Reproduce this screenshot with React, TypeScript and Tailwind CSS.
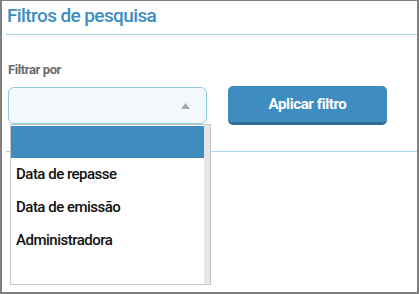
import { useState } from "react";

const options = ["", "Data de repasse", "Data de emissão", "Administradora"];

const App = () => {
  const [selected] = useState(0);

  return (
    <div className="relative w-[419px] h-[294px] bg-white border-2 border-t border-[#808080] font-['Roboto',sans-serif] overflow-hidden">
      {/* Header */}
      <div className="ml-[4px] h-[34px] border-b border-[#a6d8ec] pl-[1px] pt-[4px]">
        <h1 className="text-[19px] leading-[22px] font-medium text-[#3e8dc0] tracking-[-0.6px]">
          Filtros de pesquisa
        </h1>
      </div>

      {/* Body */}
      <div className="ml-[4px] h-[117px] border-b border-[#a6d8ec] pl-[2px] pt-[27px]">
        <label className="block text-[13px] leading-[16px] font-bold text-[#6b6b6b] tracking-[-0.4px] mb-[8px]">
          Filtrar por
        </label>
        <div className="flex items-center gap-[21px]">
          <div className="w-[199px] h-[37px] rounded-[6px] border border-[#8ecbe2] bg-[#f2f8fb] flex items-center justify-end pr-[16px]">
            <svg width="9" height="6" viewBox="0 0 9 6">
              <path d="M4.5 0 L9 6 L0 6 Z" fill="#a9a9a9" />
            </svg>
          </div>
          <button className="w-[159px] h-[39px] rounded-[5px] bg-[#3f8dc0] border-b-[3px] border-[#2f6c96] text-white text-[15px] font-bold tracking-[-0.4px]">
            Aplicar filtro
          </button>
        </div>
      </div>

      {/* Dropdown menu */}
      <div className="absolute left-[8px] top-[123px] w-[201px] h-[161px] border border-[#c6c6c6] bg-white flex">
        <ul className="flex-1 pt-[1px]">
          {options.map((opt, i) => (
            <li
              key={i}
              className={`flex items-center pl-[5px] text-[15px] font-medium tracking-[-0.5px] ${
                i === selected
                  ? "h-[32px] bg-[#3f8dc0] text-white"
                  : "h-[33px] text-[#111111]"
              }`}
            >
              {opt}
            </li>
          ))}
        </ul>
        <div className="w-[6px] bg-[#e6e6e6] rounded-b-[3px]" />
      </div>
    </div>
  );
};

export default App;
